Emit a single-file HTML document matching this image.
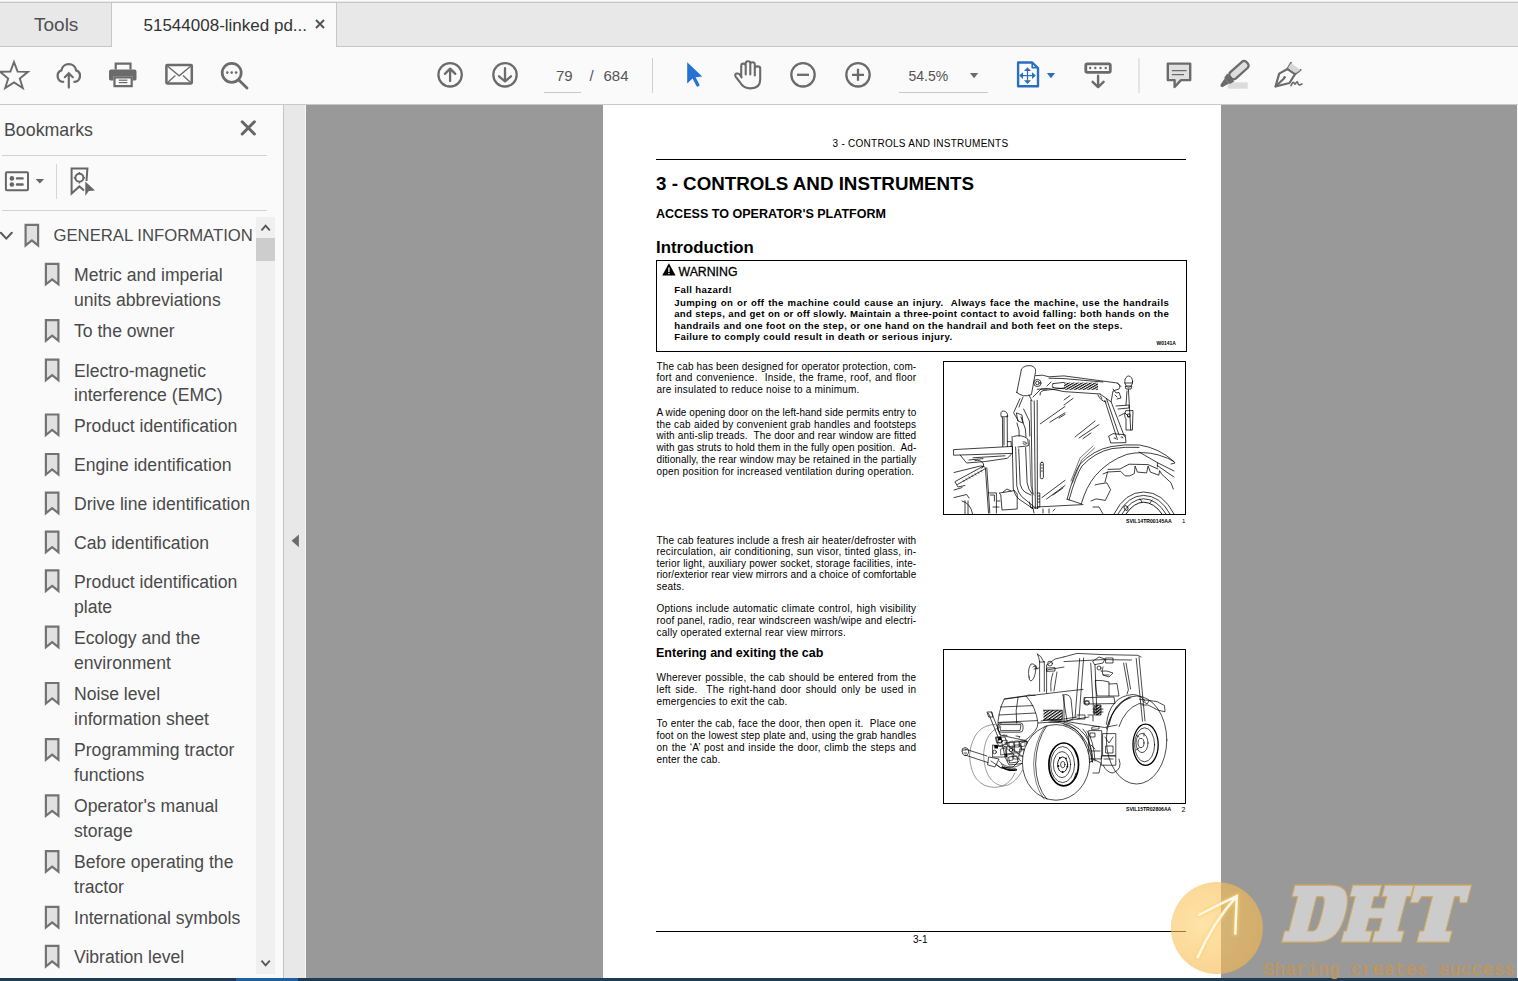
<!DOCTYPE html>
<html><head><meta charset="utf-8">
<style>
*{margin:0;padding:0;box-sizing:border-box}
html,body{width:1518px;height:981px;overflow:hidden;background:#fafafa;font-family:"Liberation Sans",sans-serif;position:relative}
.a{position:absolute}
.t{position:absolute;white-space:nowrap;line-height:1}
#tabbar{left:0;top:0;width:1518px;height:47px;background:#e8e8e8;border-top:1px solid #fafafa}
#tabline{left:0;top:2px;width:1518px;height:1px;background:#c6c6c6}
#tabbot{left:0;top:46px;width:1518px;height:1px;background:#c6c6c6}
#acttab{left:111px;top:2px;width:226px;height:45px;background:#fafafa;border-left:1px solid #c6c6c6;border-right:1px solid #c6c6c6;border-top:1px solid #c6c6c6}
#toolbar{left:0;top:47px;width:1518px;height:57px;background:#fafafa}
#tbbot{left:0;top:104px;width:1518px;height:1px;background:#c9c9c9}
#side{left:0;top:105px;width:283px;height:873px;background:#fafafa}
#sideb{left:283px;top:105px;width:1px;height:873px;background:#c4c4c4}
#strip{left:284px;top:105px;width:21px;height:873px;background:#e8e8e8;border-right:1px solid #f8f8f8;width:22px}
#doc{left:306px;top:105px;width:1211px;height:873px;background:#999999}
#page{left:603px;top:105px;width:618px;height:873px;background:#ffffff}
#task{left:0;top:978px;width:1518px;height:3px;background:#1d3b55}
.ico{position:absolute}
.p{position:absolute;white-space:nowrap;line-height:1;color:#000}
.bm{position:absolute;color:#4a4a4a;font-size:17.6px;white-space:nowrap;line-height:1}
</style></head><body>
<div id="tabbar" class="a"></div>
<div id="tabline" class="a"></div>
<div id="tabbot" class="a"></div>
<div id="acttab" class="a"></div>
<div class="t" style="left:34px;top:15px;font-size:19px;color:#505050">Tools</div>
<div class="t" style="left:143.5px;top:16.8px;font-size:17px;color:#333">51544008-linked pd...</div>

<div id="toolbar" class="a"></div>
<div id="tbbot" class="a"></div>
<div id="side" class="a"></div>
<div id="sideb" class="a"></div>
<div id="strip" class="a"></div>
<div id="doc" class="a"></div>
<div id="page" class="a"></div>
<div id="task" class="a"></div>
<!-- PAGE -->
<div class="a" style="left:656px;top:159px;width:530px;height:1px;background:#000"></div>
<div class="a" style="left:655.5px;top:260px;width:531px;height:91.5px;border:1.3px solid #000"></div>
<svg class="a" style="left:660px;top:261px" width="18" height="16" viewBox="660 261 18 16"><path d="M668.9,263.2 L675.6,275.6 L662.2,275.6 Z" fill="#000"/><path d="M668.9,267.4 L668.9,272" stroke="#fff" stroke-width="1.3"/><rect x="668.25" y="272.9" width="1.3" height="1.3" fill="#fff"/></svg>
<div class="a" style="left:943px;top:361px;width:243px;height:154px;border:1.8px solid #000"></div>
<div class="a" style="left:943px;top:649px;width:243px;height:154.5px;border:1.8px solid #000"></div>
<div class="a" style="left:656px;top:931px;width:530px;height:1px;background:#000"></div>
<div class="p" style="left:832.5px;top:139.33px;font-size:10px;letter-spacing:0.27px;">3 - CONTROLS AND INSTRUMENTS</div>
<div class="p" style="left:656px;top:174.82px;font-size:18.75px;font-weight:bold;">3 - CONTROLS AND INSTRUMENTS</div>
<div class="p" style="left:656px;top:207.87px;font-size:12.55px;font-weight:bold;">ACCESS TO OPERATOR'S PLATFORM</div>
<div class="p" style="left:656px;top:239.78px;font-size:16.8px;font-weight:bold;">Introduction</div>
<div class="p" style="left:678.5px;top:265.89px;font-size:12.3px;-webkit-text-stroke:0.3px #000;">WARNING</div>
<div class="p" style="left:674.2px;top:285.27px;font-size:9.6px;font-weight:bold;letter-spacing:0.39px;">Fall hazard!</div>
<div class="p" style="left:674.2px;top:297.77px;font-size:9.6px;font-weight:bold;width:495px;text-align:justify;text-align-last:justify;letter-spacing:0.39px;">Jumping on or off the machine could cause an injury.&nbsp; Always face the machine, use the handrails</div>
<div class="p" style="left:674.2px;top:309.27px;font-size:9.6px;font-weight:bold;width:495px;text-align:justify;text-align-last:justify;letter-spacing:0.348px;">and steps, and get on or off slowly. Maintain a three-point contact to avoid falling: both hands on the</div>
<div class="p" style="left:674.2px;top:320.87px;font-size:9.6px;font-weight:bold;letter-spacing:0.39px;">handrails and one foot on the step, or one hand on the handrail and both feet on the steps.</div>
<div class="p" style="left:674.2px;top:332.47px;font-size:9.6px;font-weight:bold;letter-spacing:0.39px;">Failure to comply could result in death or serious injury.</div>
<div class="p" style="left:1156.5px;top:341.37px;font-size:5px;font-weight:bold;">W0141A</div>
<div class="p" style="left:656.5px;top:361.53px;font-size:10.0px;width:259.8px;text-align:justify;text-align-last:justify;letter-spacing:0.117px;">The cab has been designed for operator protection, com-</div>
<div class="p" style="left:656.5px;top:373.41px;font-size:10.0px;width:259.8px;text-align:justify;text-align-last:justify;letter-spacing:0.21px;">fort and convenience.&nbsp; Inside, the frame, roof, and floor</div>
<div class="p" style="left:656.5px;top:385.29px;font-size:10.0px;letter-spacing:0.21px;">are insulated to reduce noise to a minimum.</div>
<div class="p" style="left:656.5px;top:407.63px;font-size:10.0px;width:259.8px;text-align:justify;text-align-last:justify;letter-spacing:0.053px;">A wide opening door on the left-hand side permits entry to</div>
<div class="p" style="left:656.5px;top:419.51px;font-size:10.0px;width:259.8px;text-align:justify;text-align-last:justify;letter-spacing:0.201px;">the cab aided by convenient grab handles and footsteps</div>
<div class="p" style="left:656.5px;top:431.39px;font-size:10.0px;width:259.8px;text-align:justify;text-align-last:justify;letter-spacing:0.122px;">with anti-slip treads.&nbsp; The door and rear window are fitted</div>
<div class="p" style="left:656.5px;top:443.27px;font-size:10.0px;width:259.8px;text-align:justify;text-align-last:justify;letter-spacing:0.060px;">with gas struts to hold them in the fully open position.&nbsp; Ad-</div>
<div class="p" style="left:656.5px;top:455.15px;font-size:10.0px;width:259.8px;text-align:justify;text-align-last:justify;letter-spacing:0.092px;">ditionally, the rear window may be retained in the partially</div>
<div class="p" style="left:656.5px;top:467.03px;font-size:10.0px;letter-spacing:0.21px;">open position for increased ventilation during operation.</div>
<div class="p" style="left:656.5px;top:535.53px;font-size:10.0px;width:259.8px;text-align:justify;text-align-last:justify;letter-spacing:0.140px;">The cab features include a fresh air heater/defroster with</div>
<div class="p" style="left:656.5px;top:547.03px;font-size:10.0px;width:259.8px;text-align:justify;text-align-last:justify;letter-spacing:0.21px;">recirculation, air conditioning, sun visor, tinted glass, in-</div>
<div class="p" style="left:656.5px;top:558.53px;font-size:10.0px;width:259.8px;text-align:justify;text-align-last:justify;letter-spacing:0.138px;">terior light, auxiliary power socket, storage facilities, inte-</div>
<div class="p" style="left:656.5px;top:570.03px;font-size:10.0px;width:259.8px;text-align:justify;text-align-last:justify;letter-spacing:0.091px;">rior/exterior rear view mirrors and a choice of comfortable</div>
<div class="p" style="left:656.5px;top:581.53px;font-size:10.0px;letter-spacing:0.21px;">seats.</div>
<div class="p" style="left:656.5px;top:604.43px;font-size:10.0px;width:259.8px;text-align:justify;text-align-last:justify;letter-spacing:0.21px;">Options include automatic climate control, high visibility</div>
<div class="p" style="left:656.5px;top:616.23px;font-size:10.0px;width:259.8px;text-align:justify;text-align-last:justify;letter-spacing:0.142px;">roof panel, radio, rear windscreen wash/wipe and electri-</div>
<div class="p" style="left:656.5px;top:628.03px;font-size:10.0px;letter-spacing:0.21px;">cally operated external rear view mirrors.</div>
<div class="p" style="left:656px;top:647.42px;font-size:12.5px;font-weight:bold;">Entering and exiting the cab</div>
<div class="p" style="left:656.5px;top:673.23px;font-size:10.0px;width:259.8px;text-align:justify;text-align-last:justify;letter-spacing:0.21px;">Wherever possible, the cab should be entered from the</div>
<div class="p" style="left:656.5px;top:685.03px;font-size:10.0px;width:259.8px;text-align:justify;text-align-last:justify;letter-spacing:0.21px;">left side.&nbsp; The right-hand door should only be used in</div>
<div class="p" style="left:656.5px;top:696.83px;font-size:10.0px;letter-spacing:0.21px;">emergencies to exit the cab.</div>
<div class="p" style="left:656.5px;top:719.13px;font-size:10.0px;width:259.8px;text-align:justify;text-align-last:justify;letter-spacing:0.21px;">To enter the cab, face the door, then open it.&nbsp; Place one</div>
<div class="p" style="left:656.5px;top:730.93px;font-size:10.0px;width:259.8px;text-align:justify;text-align-last:justify;letter-spacing:0.142px;">foot on the lowest step plate and, using the grab handles</div>
<div class="p" style="left:656.5px;top:742.73px;font-size:10.0px;width:259.8px;text-align:justify;text-align-last:justify;letter-spacing:0.21px;">on the &#8216;A&#8217; post and inside the door, climb the steps and</div>
<div class="p" style="left:656.5px;top:754.53px;font-size:10.0px;letter-spacing:0.21px;">enter the cab.</div>
<div class="p" style="left:1126px;top:519.14px;font-size:5.15px;font-weight:bold;">SVIL14TR00145AA</div>
<div class="p" style="left:1182px;top:518.42px;font-size:6px;">1</div>
<div class="p" style="left:1126px;top:807.18px;font-size:5.1px;font-weight:bold;">SVIL15TR02806AA</div>
<div class="p" style="left:1181.5px;top:805.57px;font-size:7px;">2</div>
<div class="p" style="left:913px;top:934.53px;font-size:10px;">3-1</div>
<!-- /PAGE -->
<!-- FIGS -->

<svg class="a" style="left:944px;top:362px" width="241" height="152" viewBox="1 1 241 152">
<defs>
<pattern id="hatch" width="2.2" height="2.2" patternUnits="userSpaceOnUse" patternTransform="rotate(60)"><rect width="1.1" height="2.2" fill="#000"/></pattern>
<clipPath id="c1"><rect x="1" y="1" width="241" height="152"/></clipPath>
</defs>
<g clip-path="url(#c1)" fill="none" stroke="#000" stroke-width="0.75" stroke-linejoin="round" stroke-linecap="round">
<!-- hood -->
<path d="M11,88.6 L69.5,85.4 L69.5,92.4 L11,94.2 Z"/>
<path d="M17.3,94.2 L23.6,102 L42.4,100.5 L64.4,97.3 L68.5,93"/>
<path d="M26,99 L40,97.6 M30,96.8 L62,94.8"/>
<!-- exhaust -->
<path d="M59.7,85.6 L59.4,56 M64.4,85.6 L64.2,54.5 M61,57 L61,84"/>
<path d="M58.2,55.6 Q56.8,50.4 60.2,50 Q64.6,50.2 64.8,55.2 Z"/>
<path d="M64.4,80.6 L68.2,80.6 L68.2,85.4"/>
<!-- left lower -->
<path d="M11,111.5 L37.7,104.9 L41.6,106"/>
<path d="M12.4,120.4 L40.6,105 M14.6,123.4 L42.4,107.6"/>
<path d="M20,119 L21,120.6 M23,117.4 L24,119 M26,115.8 L27,117.4 M29,114.2 L30,115.8 M32,112.6 L33,114.2 M35,111 L36,112.6 M38,109.4 L39,111" stroke-width="0.5"/>
<path d="M12,121 L15,126 L22,124.5"/>
<path d="M11,129 L19,126.6 M11,136.6 L23.6,133.5 L26,137"/>
<path d="M19,140 Q27.6,142 29.6,153 M22,139.6 L22,153 M25,140 L25,153"/>
<path d="M32,99.6 Q37.5,98 40.6,103 Q41,106 38.6,107.4"/>
<path d="M42.4,106.8 L45.5,152 M43.8,106.8 L46.8,152"/>
<path d="M45.5,131.9 L53.4,131.9 L53.4,152 M47.2,134 L51.4,134 L51.4,140"/>
<path d="M56.6,132 L71.4,129.6 L74.2,133 L74.2,148 L59,149 L57.8,134 Z M60,131 L64,128 L68,130"/>
<path d="M50,146 L56,146 M54,140 L57,140"/>
<!-- A pillar / door front -->
<path d="M69.1,75.4 L69.4,90.5 L70.3,128 Q72,135 75.7,137.9 L90.2,147.8 L91,152"/>
<path d="M72.6,86 L72.8,90.5 L73.8,124.9 Q75,132 78.7,135.6 L91.7,146.3"/>
<path d="M75.7,88 L77.2,123.3 Q78.6,128.6 81.8,131 L87.9,134"/>
<path d="M82.6,86.6 L84.1,121.8 Q85.4,129 88.7,132.5"/>
<path d="M86.4,79 L87.9,124.9 L91,134" stroke-width="0.5"/>
<path d="M70.6,75.4 Q79,73 84.8,78 L85.4,84.8 L75,86"/>
<path d="M80,80.8 Q83.6,80.6 83.8,82.6 Q81.6,84 80,82.8"/>
<path d="M87.9,39.3 L89.5,147.6 M91.2,40 L92.4,147.6 M94.2,39.3 L94.4,147.6"/>
<path d="M80.6,48 L86.4,60 L86.8,75 M78,56 L82.4,68 L83,76"/>
<path d="M74,62 Q77,70 76.2,75 M73.8,52 L79,54 L80,62 L75,60 Z"/>
<path d="M86.4,141 L88,147 L95,147"/>
<path d="M94.2,132 L96.8,132 L96.8,146 L94.6,146 M95,135 L96.6,135 M95,138 L96.6,138 M95,141 L96.6,141"/>
<!-- mirror -->
<path d="M73.8,31.4 L78.5,7.9 Q82,4 87.9,4.7 Q93,6 92.6,10.4 L88.4,33.6 Q80,37 73.8,31.4 Z"/>
<path d="M76.9,37.7 L70.6,51.8 L75.4,59.7 M80,36 L76,46 M86,34 L89,40"/>
<circle cx="94.4" cy="22" r="3.6"/><circle cx="94.4" cy="22" r="1.8"/>
<path d="M90,36 L98,28 L104,28"/>
<!-- roof beam -->
<path d="M92.6,14.6 Q100,13.2 106,15.8 L121,14.9 L174.4,22 L178,25.6"/>
<path d="M94.2,28.3 L106,27.6 L121,30.6 L157.1,33"/>
<path d="M106,17.2 L121,17.6 L160,21"/>
<path d="M97,34 Q96,31 100,29.6 L121,27 M104,25 L108,21"/>
<rect x="121" y="21.6" width="34" height="7.2" fill="url(#hatch)" stroke="none"/>
<path d="M110,22.6 L121,21.4 M110,26.6 L121,27.8 M110,22.6 Q108.4,24.6 110,26.6"/>
<!-- glass -->
<path d="M97.3,62.8 L122,45.5 M106.8,61.2 L122,51.8 M116,57 L122,53.4"/>
<path d="M98.9,136.6 L122,119.3 M103.6,138 L122,124.5 M110,134 L120,127"/>
<path d="M132,76 L152,60 M136,77 L156,63.6 M140,77.6 L148,72"/>
<path d="M121,39 L127,34.6 M121,44 L130,37.4"/>
<!-- door handle -->
<rect x="97.3" y="101.3" width="3.1" height="16.5" rx="1.5"/>
<path d="M98.4,104 L99.4,104 M98.4,107 L99.4,107 M98.4,110 L99.4,110"/>
<path d="M94.2,146 L122,144.5 L140,143.6 M100,148 L100,152 M106,148 L106,152 M110,150 L112,148"/>
<!-- rear pillar -->
<path d="M157.1,33 L168.1,40.8 L181.4,75.4 M161.8,39.3 L174.4,78.5 M163.5,37.6 L176,74"/>
<path d="M174.4,22 Q178.4,24.4 176,28 L170,30 L168.1,40.8"/>
<path d="M155,34 Q157.4,40 163,41 M157.5,35 L159,38"/>
<path d="M170,28 L173,32 L176,31.4 L178,37 L174,38 M172,34 L174,36"/>
<path d="M173,45 L186,44 L186,47 L175,48 M176,55 L182,52 L186,56"/>
<ellipse cx="185.7" cy="20.6" rx="3.9" ry="5.6"/>
<path d="M181.8,22 L189.6,22 M182.6,25 L188.8,25 L188,28 L183.4,28 Z"/>
<path d="M185.4,28.3 L186.4,45 L187.7,69.1 M184,30 L183,44"/>
<path d="M182.6,50 Q180.6,55 183,58 L183,69 L189.4,69 L190,50 Z M185,53 L187,53 L187,56 L185,56 Z"/>
<path d="M166,75 L170,72.6 L182.2,73.8 L183,81.6 L168.1,82 Z M171,77 Q172.6,76 173,78 M178,76 Q179.6,75 180,77"/>
<!-- fender -->
<path d="M124.1,138.2 Q131,112 136.7,103.6 Q150,89 168.1,85.6 Q182,83 196.4,84 Q216,87 230.9,100.5 L232,102 L228,103"/>
<path d="M126,139 Q133,114 139,105 Q152,91 169,87.6 Q183,85.6 196,86.4"/>
<path d="M138.3,142.9 Q143,126 152.4,114.6 Q165,100 183.8,93.4 Q200,89.6 215.2,93.9 Q226,97 230.9,100.5"/>
<path d="M124.1,138.2 L138.3,142.9"/>
<!-- tread -->
<path d="M160,113 L164.6,111 L177.6,110.3 L182.2,114.9 L186.8,114.9 L191.3,112.6 L192.1,105 L194.4,111.1 L203.6,111.9 L205.1,105 L207.4,111.1 L215.8,114.2 L216.6,109.6 L218.9,113.4 L228,121.8 L230.3,128"/>
<path d="M165,108.4 L177,108 L186,103.2 L205,103.6 L215,108"/>
<path d="M152,124 L154.6,123.3 L163.8,121.8 L167.6,128.7 L162.3,139.4 L153.1,137.9 L148,140"/>
<path d="M162,121 L164.6,111 M150,146 L156,146 L160,153"/>
<path d="M214.4,101.6 L231,110 M214.4,104.6 L231,116"/>
<path d="M196,91 L214.4,101.6 L214.4,106"/>
<path d="M128,120 L137,97 L150,85 M129.4,122 L138.6,99 L151.6,87" stroke-width="0.5" stroke-dasharray="0.8 0.6"/>
<!-- hub -->
<path d="M171,153 Q182,131 200.5,131 Q220,131 231,153"/>
<path d="M175,153 Q185,134.6 200.5,134.4 Q217,134.6 227,153"/>
<path d="M179,153 Q188,138 200.5,137.8 Q214,138 223,153"/>
<path d="M183,153 Q191,141.4 200.5,141.2 Q211,141.4 219,153" stroke-width="0.9"/>
<ellipse cx="183" cy="147" rx="1.8" ry="2.6" transform="rotate(-30 183 147)"/>
<path d="M197,138 L199,141 M209,139 L207,142"/>
</g>
</svg>

<svg class="a" style="left:944px;top:650px" width="241" height="152" viewBox="1 1 241 152">
<defs>
<pattern id="hatch2" width="2.4" height="2.4" patternUnits="userSpaceOnUse" patternTransform="rotate(55)"><rect width="1.2" height="2.4" fill="#000"/></pattern>
<clipPath id="c2"><rect x="1" y="1" width="241" height="152"/></clipPath>
</defs>
<g clip-path="url(#c2)" fill="none" stroke="#000" stroke-width="0.7" stroke-linejoin="round" stroke-linecap="round">
<!-- rear wheel -->
<ellipse cx="193.6" cy="91" rx="30.2" ry="44" fill="#fff"/>
<path d="M186,48 Q168,60 163.4,80"/>
<ellipse cx="202.6" cy="95.8" rx="12.6" ry="20.6" stroke-width="1.3"/>
<ellipse cx="201.6" cy="95.8" rx="10" ry="17"/>
<ellipse cx="199" cy="94" rx="6" ry="9.6"/>
<ellipse cx="198" cy="94" rx="3" ry="4.6"/>
<path d="M193,86 L196,88 M193,101 L196,99 M201,84 L201,87"/>
<!-- far front wheel -->
<path d="M52,75.4 Q30,76 26.5,106 Q28,138 52,138.4 Q66,138 72,124" stroke="#555" stroke-width="0.6"/>
<path d="M58,78 Q42,82 40.6,106 Q42,134 60,137 Q72,136 80,120" stroke="#555" stroke-width="0.6" stroke-dasharray="3 0.8"/>
<!-- grille -->
<path d="M61.2,50.2 Q55,62 54.6,80 L57,86 L82,91.5 Q95,82 95,74 Q93,58 83.2,47.1 Z"/>
<path d="M57.4,58 L90,56.6 M56,66 L92.4,64 M55.4,73.4 L94,71.6"/>
<path d="M75,48.4 Q72,62 73.6,74"/>
<rect x="55" y="73.8" width="25" height="9.4" rx="3"/>
<path d="M57,75.6 L78,75.6 L77,81.6 L58,81.6 Z"/>
<path d="M60,86 L64,86.4 M73,87 L77,87.6 L76,89"/>
<!-- hood -->
<path d="M61.2,50.2 L83.2,47.1 L122,42.4 L140,40.4"/>
<path d="M83.2,47.1 L85,46 L92,46.4"/>
<path d="M95,74 L122,72.2 L146,68"/>
<rect x="100.5" y="61.2" width="18.8" height="10" fill="url(#hatch2)" stroke="none"/>
<path d="M100.5,61.2 L119.3,61.2 L119.3,71.2 L100.5,71.2"/>
<path d="M98,72 L106,70.6 L118,70.6"/>
<!-- front linkage -->
<path d="M45.5,64.4 L55,87.9 M48.2,63 L57.6,86"/>
<path d="M44.4,63 L49,63 L50,68 L46,68 Z"/>
<path d="M22,100 L44,107 M22,106 L45,113.6 M19,102 Q18.6,98.6 22,98.6 Q26,99 25.6,103 Q25,107 21.6,106.6 Q19,106 19,102"/>
<path d="M20,101 L23,101 M21,104 L23.6,104"/>
<!-- machinery -->
<path d="M53,88 L62,88 L64,95 L56,97 Z M50,96 L60,98 L62,108 L50,108 Z M46,108 L56,110 L52,118 L45,116 Z"/>
<path d="M62,94 L84,92 L84,114 L66,116 L62,108"/>
<path d="M64,98 L70,97 L70,104 L64,105 Z M72,96 L78,96 L78,103 L72,103 Z M66,108 L74,107 L75,113 L67,114 Z"/>
<circle cx="57" cy="92" r="2.2"/><circle cx="51.6" cy="103" r="1.8"/><circle cx="68" cy="101" r="1.6"/>
<path d="M48,112 L58,119 L70,118 L76,112 M54,116 Q60,122 72,120"/>
<path d="M78,94 L84,92 L84,100 L79,101 Z"/>
<!-- machinery dense -->
<g stroke-width="0.6">
<path d="M53,89 L58,88 L59,93 L54,94 Z M59,92 L64,91 L65,97 L60,98 Z M66,93 L70,92 L71,98 L67,99 Z M72,92 L76,92 L76,98 L72,98 Z M77,92 L82,91 L82,97 L77,98 Z"/>
<path d="M58,100 L62,99 L63,105 L58,106 Z M64,106 L69,105 L70,111 L65,112 Z M71,104 L75,104 L76,110 L71,110 Z M77,100 L81,100 L81,107 L77,107 Z"/>
<path d="M56,112 Q62,119 72,118 Q79,116 82,110 M58,115 Q64,121 73,120"/>
<path d="M60,96 L78,112 M62,94 L80,108"/>
</g>
<g fill="#000" stroke="none">
<path d="M54.6,88 L58,87.6 L58.6,91 L55,91.4 Z"/>
<path d="M51,96.6 Q53,95 55,96.6 L55,99.6 L51.6,99.6 Z"/>
<path d="M59,117 Q66,122 74,120 L74,121.4 Q66,123.6 58.6,118.4 Z"/>
<path d="M62,105 L64,104.6 L64.4,108 L62.4,108.4 Z"/>
</g>
<!-- exhaust & mirror -->
<path d="M96.6,12.6 L96.6,42.4 M101.3,12.6 L101.3,42.4 M96.6,13 L101.3,13"/>
<path d="M94.4,5 Q98,6 100.6,12.6 M96.6,12.6 Q96,8 94.4,5"/>
<path d="M86,28 Q84.4,20 88,15 Q92.6,14 92.8,20 Q92,30 88,32 Q86,32 86,28 Z"/>
<path d="M91,20 L96,19 M90,18 L93,16.6 L94,20"/>
<!-- cab front -->
<path d="M104,16 L112,10 L121,7.9 M104,21 L121,18 M103.6,16 L103.6,44"/>
<circle cx="107" cy="14.6" r="2.4"/><path d="M104,19 L112,18.6 L112,22 L104,22.4 Z"/>
<path d="M110,24 Q107,32 108,42 M114,23 L111,42"/>
<!-- right half: roof -->
<path d="M121,7.9 L134,4.4 L160,5.6 L194.8,6.3 L198,8"/>
<path d="M121,12.6 L160,10.6 L188.5,11"/>
<path d="M136.7,9.4 L132,69.1 M140.6,9 L136,69.6"/>
<path d="M147.7,14.1 L150.8,65.9 M152,15.6 L154,66"/>
<path d="M193.2,9.4 L199.5,72.2 M196,8 L202,72"/>
<path d="M180.6,14.1 L185.4,40.8 L184,45 M183,14 L187.6,40"/>
<path d="M150,12 L156,8 L162,10 L160,14 L152,15.6 Z M163,9 L170,9 L170,14 L163,14 Z"/>
<circle cx="156" cy="19" r="2"/><path d="M160,18 Q158,22 160,26 L166,26"/>
<path d="M158,22 Q164,21 170,24 L166,28 L160,26"/>
<!-- seats/interior -->
<path d="M152.4,31.4 Q152,35 154,47 L166,47 L166,33 Q160,31 152.4,31.4 Z"/>
<path d="M166,35 L174,34.6 L176,47 L166,47"/>
<path d="M141.4,48.6 L171,48 L172,54.6 L141.4,55 Z"/>
<path d="M142,49 Q140,52 142,55 M142,52 L146,52"/>
<circle cx="144" cy="54" r="2.2"/>
<path d="M152,56 L158,56 L158,66 L152,66 Z" fill="url(#hatch2)"/>
<path d="M150,60 L160,60 M150,63 L160,63"/>
<path d="M121,70 L134,68 M121,72.2 L161.8,78.5 L174,76"/>
<path d="M134,66 L142,66 L142,70 L134,70 M145,66 L150,66 L150,72"/>
<!-- rear fender -->
<path d="M163.4,75.4 Q166.5,47.1 190.1,45.5 Q198,46 202,52"/>
<path d="M166,76 Q170,53 188,48.6"/>
<path d="M176,77.6 Q182,60 196,54.6 L200,55"/>
<path d="M196.4,50.2 L214,52.6 L221.5,56.5 L222,62.8 L215.2,61.2 L205,56 L199,56"/>
<path d="M200,52 L204,55 L206,52"/>
<!-- body centre -->
<path d="M146.1,81.6 L158.7,81.6 L158.7,109.9 L146.1,109.9 Z"/>
<path d="M147.4,84 L152,84 L152,88 L147.4,88 Z M148,96 L152,100 M148,102 L157,102"/>
<path d="M160,84.6 L172.8,84.6 L172.8,106.8 L160,106.8 Z"/>
<path d="M162,88 L166,94 L170,88 M163,97 L170,97 L170,104 L163,104 Z"/>
<path d="M158.7,106.8 L172.8,106.8 L172.8,116.2 L158.7,116.2 Z M161,110 L170,110"/>
<path d="M149.3,78 L156,77.4 L156,80 L149,80.4 Z"/>
<path d="M140,80 Q147,86 149.3,113 M144,82 Q151,92 152,112"/>
<path d="M121,75.4 Q144.6,81.6 149.3,113"/>
<path d="M150,110 L158,114 L156,124 L150,124"/>
<path d="M160,116.2 Q164,124 170,124 Q180,120 176,110"/>
<path d="M120,46 Q126,44 128,50 L130,70 L124,72 Q122,60 120,46 Z"/>
<path d="M121,47 L121,72"/>
<!-- near front wheel -->
<path d="M106,73 Q130,72 139,88 Q146,104 146.8,113 L150,112 Q149,96 142,86 Q132,72 108,71.6"/>
<ellipse cx="113" cy="113.4" rx="33.6" ry="37.8" fill="#fff"/>
<path d="M104,76.4 Q93,92 92.6,115 Q93,138 104,150.4"/>
<path d="M102,77 Q91,94 90.6,115 Q91,137 101,150" stroke-width="0.5"/>
<ellipse cx="120.7" cy="115.4" rx="14.8" ry="21.4" stroke-width="1.7"/>
<ellipse cx="119.6" cy="115.6" rx="12" ry="18"/>
<ellipse cx="119" cy="115.6" rx="8.6" ry="13"/>
<ellipse cx="119.6" cy="115.6" rx="5" ry="7.6" stroke-width="0.9"/>
<ellipse cx="119.8" cy="115.6" rx="2.2" ry="3.2"/>
<g fill="#000" stroke="none"><circle cx="116.8" cy="109" r="0.9"/><circle cx="123" cy="109.4" r="0.9"/><circle cx="115.4" cy="117" r="0.9"/><circle cx="124.4" cy="117.6" r="0.9"/><circle cx="119.6" cy="123" r="0.9"/></g>
<path d="M132,103 L134,108 M133,124 L131,130"/>
</g>
</svg>

<!-- /FIGS -->


<svg class="a" style="left:0;top:0" width="1518" height="105" viewBox="0 0 1518 105">
<g fill="none" stroke="#6b6b6b" stroke-width="2" stroke-linejoin="miter">
<!-- star -->
<path d="M14,62 L17.6,71.6 L28,71.8 L19.8,78.6 L22.8,88 L14,82.4 L5.2,88 L8.2,78.6 L0,71.8 L10.4,71.6 Z" stroke-width="1.9"/>
<!-- cloud upload -->
<path d="M63.2,81.8 A5.9,5.9 0 0 1 61.4,70.4 A7.5,7.5 0 0 1 76.2,70.4 A5.9,5.9 0 0 1 74.4,81.8" stroke-width="2.3" stroke-linecap="round"/>
<path d="M68.8,87.6 L68.8,73 M64.8,77.2 L68.8,73.2 L72.8,77.2" stroke-width="2.2" stroke-linecap="round"/>
<!-- mail -->
<rect x="166.4" y="65.1" width="25.4" height="18.3" rx="0.8" stroke-width="2.5"/>
<path d="M167.6,66.2 L179.2,75.8 L190.6,66.2 M167.6,82.4 L175.4,75.4 M183,75.4 L190.6,82.4" stroke-width="1.3"/>
<!-- search -->
<circle cx="231.7" cy="72.8" r="9.5" stroke-width="2.7"/>
<path d="M238.8,80 L247,88" stroke-width="2.8" stroke-linecap="round"/>
<!-- up/down circles -->
<circle cx="450.1" cy="74.8" r="11.7" stroke-width="2.3"/>
<path d="M450.1,81 L450.1,68.8 M444.9,73.9 L450.1,68.6 L455.3,73.9" stroke-width="2.3" stroke-linecap="round" stroke-linejoin="round"/>
<circle cx="505" cy="74.8" r="11.7" stroke-width="2.3"/>
<path d="M505,68.2 L505,81.2 M499,76.3 L505,81.4 L511,76.3" stroke-width="2.3" stroke-linecap="round" stroke-linejoin="round"/>
<!-- zoom out / in -->
<circle cx="803" cy="74.8" r="11.7" stroke-width="2.3"/>
<path d="M797,74.8 L809,74.8" stroke-width="2.3"/>
<circle cx="858" cy="74.8" r="11.7" stroke-width="2.3"/>
<path d="M852,74.8 L864,74.8 M858,68.8 L858,80.8" stroke-width="2.3"/>
<!-- hand -->
<path d="M741.2,76 L741.2,66 Q741.2,63.6 743.4,63.6 Q745.7,63.6 745.7,66 L745.7,74.5 M745.7,66 L745.7,63.6 Q745.7,61.2 748,61.2 Q750.3,61.2 750.3,63.6 L750.3,74.5 M750.3,64.6 Q750.3,62.3 752.5,62.3 Q754.8,62.3 754.8,64.6 L754.8,75.5 M754.8,68.6 Q754.8,66.4 757.4,66.4 Q760.2,66.4 760.2,68.6 L760.2,79.5 Q760.2,88.4 750.5,88.4 Q743.5,88.4 739.8,82 L735.6,76.6 Q734.4,74.4 736.6,73.6 Q738.8,73 740.4,75.4 L741.6,77.4" stroke-width="2.1" stroke-linecap="round" stroke-linejoin="round"/>
<!-- read mode -->
<rect x="1085.8" y="63.9" width="24.5" height="8.4" rx="1.5" stroke-width="2.8"/>
<path d="M1098.1,75.8 L1098.1,87 M1092.6,81.8 L1098.1,87.2 L1103.6,81.8" stroke-width="2.4" stroke-linecap="round" stroke-linejoin="round"/>
<!-- comment -->
<path d="M1167.8,63.6 L1190.2,63.6 L1190.2,80.1 L1181,80.1 L1174.6,87 L1174.6,80.1 L1167.8,80.1 Z" fill="#e0e0e0" stroke-width="2.4" stroke-linejoin="round"/>
<path d="M1171.9,70.6 L1186.6,70.6 M1171.9,74.6 L1184,74.6" stroke-width="1.2"/>
</g>
<g fill="#6b6b6b">
<!-- printer -->
<path d="M114.6,62.6 L131.6,62.6 L131.6,69.6 L129.4,69.6 L129.4,64.8 L116.8,64.8 L116.8,69.6 L114.6,69.6 Z"/>
<path d="M111,69.4 L134.5,69.4 Q136.5,69.4 136.5,71.4 L136.5,79 Q136.5,80.4 135,80.4 L132.8,80.4 L132.8,76.2 L113.4,76.2 L113.4,80.4 L110.6,80.4 Q109,80.4 109,79 L109,71.4 Q109,69.4 111,69.4 Z"/>
<path d="M113.4,76.2 L132.8,76.2 L132.8,87.2 L113.4,87.2 Z M115.6,78.4 L115.6,85 L130.6,85 L130.6,78.4 Z"/>
<rect x="118.8" y="79.6" width="8.6" height="1.2"/><rect x="118.8" y="82" width="8.6" height="1.2"/>
<!-- search dots -->
<circle cx="227.3" cy="72.6" r="1.3"/><circle cx="231.7" cy="72.6" r="1.3"/><circle cx="236.1" cy="72.6" r="1.3"/>
<!-- read mode dots -->
<circle cx="1090.2" cy="68" r="1.2"/><circle cx="1095.3" cy="68" r="1.2"/><circle cx="1100.5" cy="68" r="1.2"/><circle cx="1105.7" cy="68" r="1.2"/>
<!-- dropdown triangle -->
<path d="M970,73 L978.2,73 L974.1,78.2 Z"/>
</g>
<!-- cursor -->
<path d="M687.2,62.2 L702.2,76.6 L695.6,77.2 L699.4,84.6 Q699.8,86.2 698.2,86.6 Q696.8,87 696.2,85.6 L692.6,78.6 L687.2,83.6 Z" fill="#2372d4"/>
<!-- fit page -->
<g fill="none" stroke="#2a6ec1" stroke-width="2.4" stroke-linejoin="round">
<path d="M1018.1,62.5 L1032.2,62.5 L1038,68 L1038,86.2 L1018.1,86.2 Z"/>
<path d="M1032.2,62.8 L1032.2,67.6 L1037.6,67.6" stroke-width="1.6"/>
</g>
<g fill="#2a6ec1">
<path d="M1027.5,67.2 L1031,71 L1024,71 Z M1027.5,84 L1031,80.2 L1024,80.2 Z M1019.2,75.6 L1023,72.2 L1023,79 Z M1035.8,75.6 L1032,72.2 L1032,79 Z"/>
<rect x="1026.9" y="70" width="1.2" height="11"/><rect x="1022" y="75" width="11" height="1.2"/>
<path d="M1046.9,73 L1055.1,73 L1051,78.2 Z"/>
</g>
<!-- highlighter -->
<rect x="1227.7" y="82.4" width="20" height="6.3" fill="#dcdcdc"/>
<g transform="translate(1234.2,74.4) rotate(-42)">
<rect x="-4.6" y="-4.2" width="22" height="8.4" rx="3.2" fill="#dedede" stroke="#6b6b6b" stroke-width="2.3"/>
<path d="M-4.6,-5.3 L-9.6,-4.2 L-9.6,4.2 L-4.6,5.3 Z" fill="#6b6b6b"/>
<path d="M-9.6,-3.4 L-17.4,-1.4 Q-18.8,0 -17.4,1.6 L-9.6,3.4 Z" fill="#6b6b6b"/>
</g>
<!-- sign -->
<g fill="none" stroke="#6b6b6b" stroke-width="2.2" stroke-linejoin="round" stroke-linecap="round">
<path d="M1291,63 L1287.5,69 M1300.5,70 L1295,74.2"/>
<path d="M1287.5,69 L1295,74.2 L1289.5,83 L1275.5,86.5 L1279.2,73.6 Z" fill="none"/>
<path d="M1275.8,86.2 L1284,78.5"/>
</g>
<path d="M1291,63 L1300.5,70 L1296,73 L1288,68 Z" fill="#d6d6d6"/>
<circle cx="1284.6" cy="77.2" r="1.3" fill="#6b6b6b"/>
<path d="M1291,85.6 Q1293,81 1294.2,83 Q1294.6,85.6 1296.4,82.4 Q1297.6,80.8 1298,83.6 Q1298.6,86 1302,84" fill="none" stroke="#6b6b6b" stroke-width="1.6" stroke-linecap="round"/>
<!-- separators -->
<rect x="652" y="58" width="1" height="35" fill="#d0d0d0"/>
<rect x="1138.5" y="58" width="1" height="35" fill="#d0d0d0"/>
<!-- page input underline -->
<rect x="544" y="92" width="37" height="1" fill="#c8c8c8"/>
<rect x="899" y="92" width="89" height="1" fill="#c8c8c8"/>
<!-- tab close -->
<path d="M316,20 L324,28 M324,20 L316,28" stroke="#555" stroke-width="2"/>
</svg>
<div class="t" style="left:556px;top:68px;font-size:15px;color:#555">79</div>
<div class="t" style="left:589.5px;top:68px;font-size:15px;color:#555">/</div>
<div class="t" style="left:603.5px;top:68px;font-size:15px;color:#555">684</div>
<div class="t" style="left:908.5px;top:69px;font-size:14px;color:#555">54.5%</div>


<div class="t" style="left:4px;top:121.8px;font-size:17.8px;color:#4a4a4a">Bookmarks</div>
<div class="a" style="left:2px;top:155px;width:265px;height:1px;background:#d2d2d2"></div>
<div class="a" style="left:2px;top:210px;width:265px;height:1px;background:#d2d2d2"></div>
<div class="a" style="left:56px;top:164px;width:1px;height:35px;background:#d6d6d6"></div>
<div class="a" style="left:256px;top:217px;width:19px;height:757px;background:#f0f0f0"></div>
<div class="a" style="left:256px;top:238px;width:19px;height:23px;background:#cdcdcd"></div>
<svg class="a" style="left:0;top:105px" width="283" height="873" viewBox="0 105 283 873">
<g fill="none" stroke="#666" stroke-width="2.2" stroke-linecap="round">
<path d="M242.2,121.8 L254.4,134 M254.4,121.8 L242.2,134" stroke-width="3"/>
<rect x="5.9" y="172.2" width="22.1" height="18.1" rx="1" stroke-width="2"/>
<path d="M17,178.4 L22.6,178.4 M17,184.5 L22.6,184.5" stroke-width="2.4"/>
<path d="M0.8,232.8 L6.3,238.6 L11.8,232.8" stroke-width="2" stroke="#5a5a5a"/>
<path d="M261.5,230.4 L265.6,225.6 L269.8,230.4" stroke-width="1.8" stroke="#555" stroke-linecap="butt"/>
<path d="M261.5,960.6 L265.6,965.4 L269.8,960.6" stroke-width="1.8" stroke="#555" stroke-linecap="butt"/>
</g>
<g fill="#666">
<circle cx="11.9" cy="178.4" r="2.3"/><circle cx="11.9" cy="184.5" r="2.3"/>
<path d="M35.6,179.1 L44.1,179.1 L39.85,183.6 Z"/>
</g>
<g fill="none" stroke="#666" stroke-width="2">
<path d="M86.5,181 L87.4,168.6 L71.6,168.6 L71.6,193.4 L79.4,186.4 L84,190.4"/>
<circle cx="79.4" cy="177.7" r="4"/>
<path d="M79.4,172 L79.4,173.2 M79.4,182.2 L79.4,183.4 M73.8,177.7 L75,177.7 M83.8,177.7 L85,177.7" stroke-width="1.4"/>
</g>
<path d="M85.3,181.4 L95,190.6 L88.8,191 L85.3,195.8 Z" fill="#666"/>
<g fill="#e1e1e1" stroke="#737373" stroke-width="2.2" stroke-linejoin="miter">
<path d="M25.6,224.9 L38.1,224.9 L38.1,245.4 L31.85,240.4 L25.6,245.4 Z"/><path d="M45.9,263.8 L58.4,263.8 L58.4,284.3 L52.15,279.3 L45.9,284.3 Z"/><path d="M45.9,320.2 L58.4,320.2 L58.4,340.7 L52.15,335.7 L45.9,340.7 Z"/><path d="M45.9,359.7 L58.4,359.7 L58.4,380.2 L52.15,375.2 L45.9,380.2 Z"/><path d="M45.9,414.5 L58.4,414.5 L58.4,435.0 L52.15,430.0 L45.9,435.0 Z"/><path d="M45.9,454.0 L58.4,454.0 L58.4,474.5 L52.15,469.5 L45.9,474.5 Z"/><path d="M45.9,492.7 L58.4,492.7 L58.4,513.1999999999999 L52.15,508.2 L45.9,513.1999999999999 Z"/><path d="M45.9,531.7 L58.4,531.7 L58.4,552.2 L52.15,547.2 L45.9,552.2 Z"/><path d="M45.9,570.4 L58.4,570.4 L58.4,590.9 L52.15,585.9 L45.9,590.9 Z"/><path d="M45.9,626.7 L58.4,626.7 L58.4,647.2 L52.15,642.2 L45.9,647.2 Z"/><path d="M45.9,683.0 L58.4,683.0 L58.4,703.5 L52.15,698.5 L45.9,703.5 Z"/><path d="M45.9,739.2 L58.4,739.2 L58.4,759.7 L52.15,754.7 L45.9,759.7 Z"/><path d="M45.9,795.3 L58.4,795.3 L58.4,815.8 L52.15,810.8 L45.9,815.8 Z"/><path d="M45.9,851.2 L58.4,851.2 L58.4,871.7 L52.15,866.7 L45.9,871.7 Z"/><path d="M45.9,906.9 L58.4,906.9 L58.4,927.4 L52.15,922.4 L45.9,927.4 Z"/><path d="M45.9,945.9 L58.4,945.9 L58.4,966.4 L52.15,961.4 L45.9,966.4 Z"/>
</g>
</svg>
<div class="t" style="left:53.5px;top:228.3px;font-size:16.7px;color:#4a4a4a">GENERAL INFORMATION</div>
<div class="bm" style="left:74px;top:266.9px">Metric and imperial</div><div class="bm" style="left:74px;top:291.9px">units abbreviations</div><div class="bm" style="left:74px;top:323.3px">To the owner</div><div class="bm" style="left:74px;top:362.8px">Electro-magnetic</div><div class="bm" style="left:74px;top:387.2px">interference (EMC)</div><div class="bm" style="left:74px;top:417.6px">Product identification</div><div class="bm" style="left:74px;top:457.1px">Engine identification</div><div class="bm" style="left:74px;top:495.8px">Drive line identification</div><div class="bm" style="left:74px;top:534.8px">Cab identification</div><div class="bm" style="left:74px;top:573.5px">Product identification</div><div class="bm" style="left:74px;top:598.9px">plate</div><div class="bm" style="left:74px;top:629.8px">Ecology and the</div><div class="bm" style="left:74px;top:655.0px">environment</div><div class="bm" style="left:74px;top:686.1px">Noise level</div><div class="bm" style="left:74px;top:711.0px">information sheet</div><div class="bm" style="left:74px;top:742.3px">Programming tractor</div><div class="bm" style="left:74px;top:767.0px">functions</div><div class="bm" style="left:74px;top:798.4px">Operator's manual</div><div class="bm" style="left:74px;top:823.0px">storage</div><div class="bm" style="left:74px;top:854.3px">Before operating the</div><div class="bm" style="left:74px;top:878.9px">tractor</div><div class="bm" style="left:74px;top:910.0px">International symbols</div><div class="bm" style="left:74px;top:949.0px">Vibration level</div>


<!-- EXTRA -->
<svg class="a" style="left:284px;top:520px" width="22" height="40" viewBox="284 520 22 40"><path d="M291.6,540.8 L298.9,534.4 L298.9,547.3 Z" fill="#6b6b6b"/></svg>
<div class="a" style="left:236px;top:978px;width:62px;height:3px;background:#1f5f9e"></div>
<svg class="a" style="left:1160px;top:870px" width="358" height="111" viewBox="1160 870 358 111">
<defs>
<radialGradient id="wg" cx="0.35" cy="0.45" r="0.7"><stop offset="0" stop-color="#ffcf6a" stop-opacity="0.58"/><stop offset="1" stop-color="#f4b64c" stop-opacity="0.64"/></radialGradient>
<filter id="glow" x="-20%" y="-20%" width="140%" height="140%"><feGaussianBlur stdDeviation="1.6"/></filter>
</defs>
<circle cx="1216.9" cy="928" r="46" fill="url(#wg)"/>
<g fill="none" stroke-linecap="round">
<path d="M1197.6,957.5 Q1214,921 1236.8,896.2 M1198.6,915 Q1218,905 1236.8,896.2 L1235.3,933.6" stroke="#ffd060" stroke-width="5" opacity="0.6" filter="url(#glow)"/>
<path d="M1197.6,957.5 Q1214,921 1236.8,896.2 M1198.6,915 Q1218,905 1236.8,896.2 L1235.3,933.6" stroke="#fff8ec" stroke-width="2.5"/>
</g>
</svg>
<svg class="a" style="left:1270px;top:870px" width="248" height="80" viewBox="1270 870 248 80">
<g transform="translate(1275,875) scale(0.13504) matrix(1,0,-0.255,1,126.7,0)">
<path d="M40,75 L302,75 C430,75 468,150 468,286 C468,420 430,497 302,497 L50,497 L50,415 L82,415 L82,160 L40,160 Z M222,160 L259,160 C286,160 294,200 294,286 C294,380 286,415 259,415 L222,415 Z M468,75 L682,75 L682,160 L648,160 L648,245 L742,245 L742,160 L706,160 L706,75 L920,75 L920,160 L888,160 L888,415 L935,415 L935,497 L718,497 L718,415 L748,415 L748,320 L652,320 L652,415 L700,415 L700,497 L490,497 L490,415 L508,415 L508,160 L468,160 Z M927,75 L1347,75 L1347,205 L1295,205 L1280,160 L1244,160 L1244,415 L1290,415 L1290,497 L1050,497 L1050,415 L1080,415 L1080,160 L1000,160 L985,205 L927,205 Z" fill="#cccccc" fill-rule="evenodd" stroke="#d4aa5c" stroke-width="8" stroke-linejoin="miter"/>
</g></svg>
<div class="t" style="left:1263px;top:961px;font-family:'Liberation Mono',monospace;font-size:18px;color:#c49656;-webkit-text-stroke:0.25px #c49656;letter-spacing:0.16px">Sharing creates success</div>
<!-- /EXTRA -->
</body></html>
